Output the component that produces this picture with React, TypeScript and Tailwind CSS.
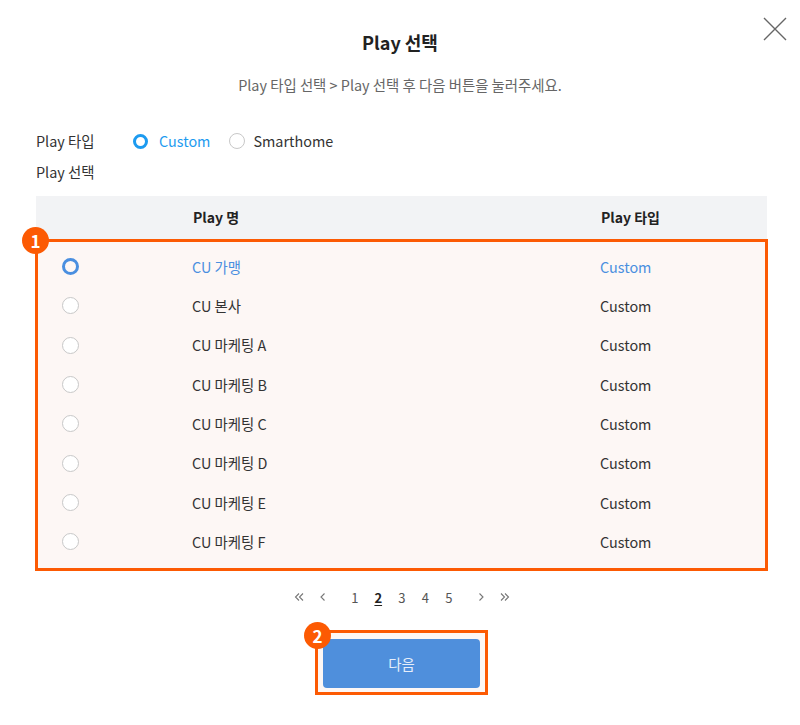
import React from 'react'

const rows = [
  { name: 'CU 가맹', type: 'Custom', selected: true },
  { name: 'CU 본사', type: 'Custom' },
  { name: 'CU 마케팅 A', type: 'Custom' },
  { name: 'CU 마케팅 B', type: 'Custom' },
  { name: 'CU 마케팅 C', type: 'Custom' },
  { name: 'CU 마케팅 D', type: 'Custom' },
  { name: 'CU 마케팅 E', type: 'Custom' },
  { name: 'CU 마케팅 F', type: 'Custom' },
]

const font = { fontFamily: '"Noto Sans CJK KR", "Noto Sans", sans-serif' }

function Badge({ n }: { n: number }) {
  return (
    <span className="absolute flex size-[27px] items-center justify-center rounded-full bg-[#fc5a03] text-[17px] font-bold leading-none text-white">
      {n}
    </span>
  )
}

function Chevron({ dir, double }: { dir: 'left' | 'right'; double?: boolean }) {
  const flip = dir === 'right' ? 'scale(-1,1) translate(-10,0)' : undefined
  return (
    <svg width="10" height="10" viewBox="0 0 10 10" className="text-[#777]">
      <g transform={flip} fill="none" stroke="currentColor" strokeWidth="1.1">
        {double ? (
          <>
            <path d="M5 1.5 1.5 5 5 8.5" />
            <path d="M9 1.5 5.5 5 9 8.5" />
          </>
        ) : (
          <path d="M6.5 1.5 3 5 6.5 8.5" />
        )}
      </g>
    </svg>
  )
}

export default function App() {
  return (
    <div className="relative h-[725px] w-[800px] bg-white text-[#333]" style={font}>
      <button className="absolute left-[763px] top-[17px]">
        <svg width="24" height="24" viewBox="0 0 24 24" fill="none" stroke="#666" strokeWidth="1.4">
          <path d="M1 1 23 23M23 1 1 23" />
        </svg>
      </button>

      <div className="pt-[29px] text-center text-[18px] font-bold leading-[26px] text-[#222]">Play 선택</div>
      <div className="mt-[20px] text-center text-[14.4px] leading-[20px] text-[#666]">
        Play 타입 선택 &gt; Play 선택 후 다음 버튼을 눌러주세요.
      </div>

      <div className="ml-[36px] mt-[34px] flex h-6 items-center text-[14.4px]">
        <span className="w-[97px]">Play 타입</span>
        <span className="size-[15px] rounded-full border-[3.5px] border-[#1d9bf0]" />
        <span className="ml-[11px] text-[#1d9bf0]">Custom</span>
        <span className="ml-[19px] size-[16px] rounded-full border border-[#c8c8c8]" />
        <span className="ml-[8px]">Smarthome</span>
      </div>
      <div className="ml-[36px] mt-[9px] text-[14.4px] leading-[20px]">Play 선택</div>

      <div className="mx-[36px] mt-[14px] w-[731px]">
        <div className="flex h-[43px] items-center bg-[#f2f3f5] text-[14px] font-bold text-[#222]">
          <span className="ml-[157px] w-[408px]">Play 명</span>
          <span>Play 타입</span>
        </div>
        <div className="relative -mx-px border-[3px] border-[#fc5a03] bg-[#fdf7f5] pb-[7px] pt-[5px] text-[14.4px]">
          <div className="-left-[16px] -top-[15px] absolute">
            <Badge n={1} />
          </div>
          {rows.map((r) => (
            <div key={r.name} className={`flex h-[39.3px] items-center ${r.selected ? 'text-[#4a8fe0]' : ''}`}>
              {r.selected ? (
                <span className="ml-[24px] size-[17px] rounded-full border-[3.5px] border-[#4a8fe0]" />
              ) : (
                <span className="ml-[24px] size-[17px] rounded-full border border-[#c8c8c8] bg-white" />
              )}
              <span className="ml-[113px] w-[408px]">{r.name}</span>
              <span>{r.type}</span>
            </div>
          ))}
        </div>
      </div>

      <div className="ml-[287px] mt-[16px] flex h-5 items-center text-[13px] text-[#555]">
        <span className="flex w-6 justify-center"><Chevron dir="left" double /></span>
        <span className="flex w-6 justify-center"><Chevron dir="left" /></span>
        <span className="w-2" />
        {[1, 2, 3, 4, 5].map((p) => (
          <span
            key={p}
            className={`w-[23.5px] text-center ${p === 2 ? 'font-bold text-[#222] underline underline-offset-2' : ''}`}
          >
            {p}
          </span>
        ))}
        <span className="w-2" />
        <span className="flex w-6 justify-center"><Chevron dir="right" /></span>
        <span className="flex w-6 justify-center"><Chevron dir="right" double /></span>
      </div>

      <div className="relative ml-[315px] mt-[23px] w-[173px] border-[3px] border-[#fc5a03] bg-[#fdf7f5] px-[5px] pb-[4px] pt-[6px]">
        <div className="-left-[14px] -top-[11px] absolute">
          <Badge n={2} />
        </div>
        <button className="flex h-[49px] w-full items-center justify-center rounded-[4px] bg-[#4f8fdc] text-[14.4px] text-[#e6eefa]">
          다음
        </button>
      </div>
    </div>
  )
}
